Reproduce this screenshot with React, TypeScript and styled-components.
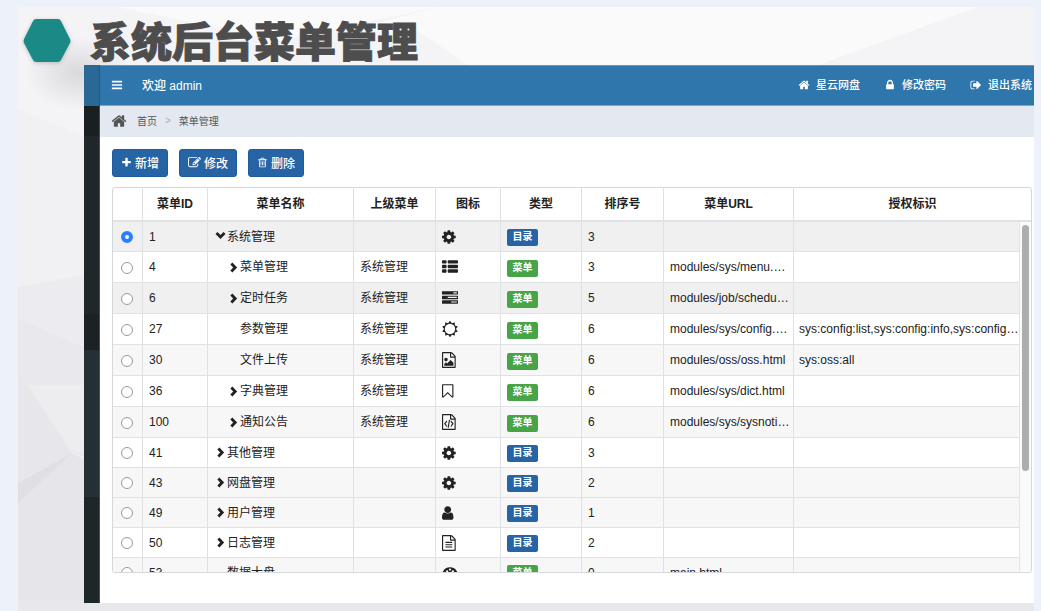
import React, { useState } from "react";
import styled, { createGlobalStyle, css } from "styled-components";

const GlobalStyle = createGlobalStyle`
  *, *::before, *::after { box-sizing: border-box; }
  html, body { margin: 0; background: #ecf1fa; }
  body, button, input {
    font-family: "Liberation Sans", "Noto Sans CJK SC", sans-serif;
    font-size: 12px;
    color: #222;
  }
  body { overflow: hidden; }
`;

/* ---------- icons ---------- */

const page =
  "M1596 380q28 28 48 76t20 88v1152q0 40-28 68t-68 28h-1344q-40 0-68-28t-28-68v-1600q0-40 28-68t68-28h896q40 0 88 20t76 48zm-444-244v376h376q-10-29-22-41l-313-313q-12-12-41-22zm384 1528v-1024h-416q-40 0-68-28t-28-68v-416h-768v1536h1280z";

const bar = (y: number) =>
  `M1664 ${y}v128q0 26-19 45t-45 19h-1408q-26 0-45-19t-19-45v-128q0-26 19-45t45-19h1408q26 0 45 19t19 45z`;

const listRow = (y: number) =>
  `M512 ${y}v192q0 40-28 68t-68 28h-320q-40 0-68-28t-28-68v-192q0-40 28-68t68-28h320q40 0 68 28t28 68z` +
  `M1792 ${y}v192q0 40-28 68t-68 28h-960q-40 0-68-28t-28-68v-192q0-40 28-68t68-28h960q40 0 68 28t28 68z`;

const taskRow = (y: number) =>
  `M1792 ${y}v256q0 26-19 45t-45 19h-1664q-26 0-45-19t-19-45v-256q0-26 19-45t45-19h1664q26 0 45 19t19 45z`;

const textLine = (y: number) =>
  `M512 ${y}q0-14 9-23t23-9h704q14 0 23 9t9 23v64q0 14-9 23t-23 9h-704q-14 0-23-9t-9-23z`;

const paths = {
  bars: bar(1344) + bar(832) + bar(320),
  home: "M1472 992v480q0 26-19 45t-45 19h-384v-384h-256v384h-384q-26 0-45-19t-19-45v-480q0-1 .5-3t.5-3l575-474 575 474q1 2 1 6zm223-69l-62 74q-8 9-21 11h-3q-13 0-21-7l-692-577-692 577q-12 8-24 7-13-2-21-11l-62-74q-8-10-7-23.5t11-21.5l719-599q32-26 76-26t76 26l244 204v-195q0-14 9-23t23-9h192q14 0 23 9t9 23v408l219 182q10 8 11 21.5t-7 23.5z",
  lock: "M640 768h512v-192q0-106-75-181t-181-75-181 75-75 181v192zm832 96v576q0 40-28 68t-68 28h-960q-40 0-68-28t-28-68v-576q0-40 28-68t68-28h32v-192q0-184 132-316t316-132 316 132 132 316v192h32q40 0 68 28t28 68z",
  signOut:
    "M704 1440q0 4 1 20t.5 26.5-3 23.5-10 19.5-20.5 6.5h-320q-119 0-203.5-84.5t-84.5-203.5v-704q0-119 84.5-203.5t203.5-84.5h320q13 0 22.5 9.5t9.5 22.5q0 4 1 20t.5 26.5-3 23.5-10 19.5-20.5 6.5h-320q-66 0-113 47t-47 113v704q0 66 47 113t113 47h312l11.5 1 11.5 3 8 5.5 7 9 2 13.5zm928-544q0 26-19 45l-544 544q-19 19-45 19t-45-19-19-45v-288h-448q-26 0-45-19t-19-45v-384q0-26 19-45t45-19h448v-288q0-26 19-45t45-19 45 19l544 544q19 19 19 45z",
  plus: "M1600 736v192q0 40-28 68t-68 28h-416v416q0 40-28 68t-68 28h-192q-40 0-68-28t-28-68v-416h-416q-40 0-68-28t-28-68v-192q0-40 28-68t68-28h416v-416q0-40 28-68t68-28h192q40 0 68 28t28 68v416h416q40 0 68 28t28 68z",
  edit: "M888 1184l116-116-152-152-116 116v56h96v96h56zm440-720q-16-16-33 1l-350 350q-17 17-1 33t33-1l350-350q17-17 1-33zm80 594v190q0 119-84.5 203.5t-203.5 84.5h-832q-119 0-203.5-84.5t-84.5-203.5v-832q0-119 84.5-203.5t203.5-84.5h832q63 0 117 25 15 7 18 23 3 17-9 29l-49 49q-14 14-32 8-23-6-45-6h-832q-66 0-113 47t-47 113v832q0 66 47 113t113 47h832q66 0 113-47t47-113v-126q0-13 9-22l64-64q15-15 35-7t20 29zm-96-738l288 288-672 672h-288v-288zm444 132l-92 92-288-288 92-92q28-28 68-28t68 28l152 152q28 28 28 68t-28 68z",
  trash:
    "M704 736v576q0 14-9 23t-23 9h-64q-14 0-23-9t-9-23v-576q0-14 9-23t23-9h64q14 0 23 9t9 23zm256 0v576q0 14-9 23t-23 9h-64q-14 0-23-9t-9-23v-576q0-14 9-23t23-9h64q14 0 23 9t9 23zm256 0v576q0 14-9 23t-23 9h-64q-14 0-23-9t-9-23v-576q0-14 9-23t23-9h64q14 0 23 9t9 23zm128 724v-948h-896v948q0 22 7 40.5t14.5 27 10.5 8.5h832q3 0 10.5-8.5t14.5-27 7-40.5zm-672-1076h448l-48-117q-7-9-17-11h-317q-10 2-17 11zm928 32v64q0 14-9 23t-23 9h-96v948q0 83-47 143.5t-113 60.5h-832q-66 0-113-58.5t-47-141.5v-952h-96q-14 0-23-9t-9-23v-64q0-14 9-23t23-9h309l70-167q15-37 54-63t79-26h320q40 0 79 26t54 63l70 167h309q14 0 23 9t9 23z",
  cog: "M1152 896q0-106-75-181t-181-75-181 75-75 181 75 181 181 75 181-75 75-181zm512-109v222q0 12-8 23t-20 13l-185 28q-19 54-39 91 35 50 107 138 10 12 10 25t-9 23q-27 37-99 108t-94 71q-12 0-26-9l-138-108q-44 23-91 38-16 136-29 186-7 28-36 28h-222q-14 0-24.5-8.5t-11.5-21.5l-28-184q-49-16-90-37l-141 107q-10 9-25 9-14 0-25-11-126-114-165-168-7-10-7-23 0-12 8-23 15-21 51-66.5t54-70.5q-27-50-41-99l-183-27q-13-2-21-12.5t-8-23.5v-222q0-12 8-23t19-13l186-28q14-46 39-92-40-57-107-138-10-12-10-24 0-10 9-23 26-36 98.5-107.5t94.5-71.5q13 0 26 10l138 107q44-23 91-38 16-136 29-186 7-28 36-28h222q14 0 24.5 8.5t11.5 21.5l28 184q49 16 90 37l142-107q9-9 24-9 13 0 25 10 129 119 165 170 7 8 7 22 0 12-8 23-15 21-51 66.5t-54 70.5q26 50 41 98l183 28q13 2 21 12.5t8 23.5z",
  list: listRow(1248) + listRow(736) + listRow(224),
  tasks:
    taskRow(1216) +
    taskRow(704) +
    taskRow(192) +
    "M1024 1408h640v-128h-640zM640 896h1024v-128h-1024zM1280 384h384v-128h-384z",
  sun: "M1472 896q0-117-45.5-223.5t-123-184-184-123-223.5-45.5-223.5 45.5-184 123-123 184-45.5 223.5 45.5 223.5 123 184 184 123 223.5 45.5 223.5-45.5 184-123 123-184 45.5-223.5zm276 277q-4 15-20 20l-292 96v306q0 16-13 26-15 10-29 4l-292-94-180 248q-10 13-26 13t-26-13l-180-248-292 94q-14 6-29-4-13-10-13-26v-306l-292-96q-16-5-20-20-5-17 4-29l180-248-180-248q-9-13-4-29 4-15 20-20l292-96v-306q0-16 13-26 15-10 29-4l292 94 180-248q9-12 26-12t26 12l180 248 292-94q14-6 29 4 13 10 13 26v306l292 96q16 5 20 20 5 16-4 29l-180 248 180 248q9 12 4 29z",
  image:
    page +
    "M1408 1216v320h-1024v-192l192-192 128 128 384-384zM576 1024q-80 0-136-56t-56-136 56-136 136-56 136 56 56 136-56 136-136 56z",
  bookmark:
    "M1408 256h-1024v1242l423-406 89-85 89 85 423 406v-1242zm12-128q23 0 44 9 33 13 52.5 41t19.5 62v1289q0 34-19.5 62t-52.5 41q-19 8-44 8-48 0-83-32l-441-424-441 424q-36 33-83 33-23 0-44-9-33-13-52.5-41t-19.5-62v-1289q0-34 19.5-62t52.5-41q21-9 44-9h1048z",
  code:
    page +
    "M608 768q8-11 21-12.5t24 6.5l51 38q11 8 12.5 21t-6.5 24l-182 243 182 243q8 11 6.5 24t-12.5 21l-51 38q-11 8-24 6.5t-21-12.5l-226-301q-14-19 0-38zm802 301q14 19 0 38l-226 301q-8 11-21 12.5t-24-6.5l-51-38q-11-8-12.5-21t6.5-24l182-243-182-243q-8-11-6.5-24t12.5-21l51-38q11-8 24-6.5t21 12.5zm-620 461q-13-2-20.5-13t-5.5-24l138-831q2-13 13-20.5t24-5.5l63 10q13 2 20.5 13t5.5 24l-138 831q-2 13-13 20.5t-24 5.5z",
  user: "M1536 1399q0 109-62.5 187t-150.5 78h-854q-88 0-150.5-78t-62.5-187q0-85 8.5-160.5t31.5-152 58.5-131 94-89 134.5-34.5q131 128 313 128t313-128q76 0 134.5 34.5t94 89 58.5 131 31.5 152 8.5 160.5zm-256-887q0 159-112.5 271.5t-271.5 112.5-271.5-112.5-112.5-271.5 112.5-271.5 271.5-112.5 271.5 112.5 112.5 271.5z",
  file: page + textLine(800) + textLine(1056) + textLine(1312),
  gauge:
    "M896 256a896 896 0 0 1 760 1370q-18 38-56 38H192q-38 0-56-38A896 896 0 0 1 896 256zM384 1024a128 128 0 1 0 0 256 128 128 0 0 0 0-256zM576 576a128 128 0 1 0 0 256 128 128 0 0 0 0-256zM896 384a128 128 0 1 0 0 256 128 128 0 0 0 0-256zM1216 576a128 128 0 1 0 0 256 128 128 0 0 0 0-256zM1408 1024a128 128 0 1 0 0 256 128 128 0 0 0 0-256zM850 1150a160 160 0 1 0 124 20l80-380-100-24z",
  right: "M740 206L1400 896 740 1586 460 1310 850 896 460 482z",
  down: "M206 560L482 280 896 690 1310 280 1586 560 896 1240z",
};

type IconName = keyof typeof paths;

/* Left bearing of glyphs narrower than the em box, so they align to the cell's start. */
const bearings: Partial<Record<IconName, number>> = {
  cog: 128,
  image: 128,
  code: 128,
  file: 128,
  user: 256,
  bookmark: 256,
};

const Svg = styled.svg`
  flex: none;
  display: block;
  fill: currentColor;
`;

const Icon = ({ name, size = 14 }: { name: IconName; size?: number }) => (
  <Svg width={size} height={size} viewBox={`${bearings[name] ?? 0} 0 1792 1792`} aria-hidden="true">
    <path d={paths[name]} fillRule="evenodd" />
  </Svg>
);

/* ---------- slide ---------- */

const Slide = styled.div`
  position: relative;
  margin: 7px 7px 0 18px;
  min-height: calc(100vh - 7px);
  padding-bottom: 8px;
  background: #f4f4f6;
`;

const Backdrop = styled.svg`
  position: absolute;
  inset: 0;
  width: 100%;
  height: 100%;
`;

const SlideTitle = styled.header`
  position: relative;
  display: flex;
  align-items: flex-start;
  gap: 18px;
  height: 58px;
  padding: 12px 0 0 4px;

  h1 {
    margin: 0;
    font-family: "Noto Sans CJK SC", sans-serif;
    font-size: 41px;
    line-height: 40px;
    font-weight: 900;
    color: #4d4d4d;
    -webkit-text-stroke: 1px #4d4d4d;
    white-space: nowrap;
  }
`;

const Hexagon = styled.svg`
  flex: none;
  display: block;
  filter: drop-shadow(0 1px 2px rgba(0, 0, 0, 0.2));
`;

/* ---------- application ---------- */

const AppFrame = styled.div`
  position: relative;
  display: flex;
  margin-left: 66px;
  background: #fff;
`;

const Sidebar = styled.aside`
  flex: none;
  display: flex;
  flex-direction: column;
  width: 16px;
  border-right: 1px solid #4a4e50;
`;

const SideBlock = styled.div<{ $h?: number; $bg: string }>`
  flex: ${(p) => (p.$h ? `0 0 ${p.$h}px` : "1")};
  background: ${(p) => p.$bg};
`;

const Main = styled.main`
  flex: 1;
  min-width: 0;
  padding-bottom: 30px;
`;

const TopBar = styled.nav`
  display: flex;
  align-items: center;
  height: 41px;
  padding: 0 2px 2px 11px;
  background: #2e76ab;
  border-top: 1px solid #6f93ad;
  border-bottom: 1px solid #7fa9c8;
  color: #fff;
`;

const MenuToggle = styled.button`
  display: flex;
  padding: 0;
  border: 0;
  background: none;
  color: inherit;
`;

const Welcome = styled.span`
  flex: 1;
  margin-left: 19px;
  font-weight: 500;
`;

const TopLinks = styled.div`
  display: flex;
  gap: 24px;
`;

const TopLink = styled.a`
  display: flex;
  align-items: center;
  gap: 6px;
  color: inherit;
  font-size: 11px;
  font-weight: 500;
  line-height: 16px;
  text-decoration: none;
  white-space: nowrap;
`;

const Crumbs = styled.nav`
  display: flex;
  align-items: center;
  gap: 8px;
  height: 31px;
  padding: 0 0 2px 11px;
  background: #e4e9f1;
  color: #555;
  font-size: 10px;

  a {
    color: inherit;
    text-decoration: none;
    margin-left: 2px;
  }
`;

const CrumbSep = styled.span`
  color: #aaa;
`;

const Content = styled.section`
  padding: 12px 2px 0 12px;
`;

const Toolbar = styled.div`
  display: flex;
  gap: 11px;
  margin-bottom: 10px;
`;

const ToolButton = styled.button`
  display: flex;
  align-items: center;
  justify-content: center;
  gap: 3px;
  height: 28px;
  padding: 0 8px 1px;
  border: 1px solid #1f5b9b;
  border-radius: 3px;
  background: #2764a5;
  color: #fff;
  font-weight: 500;
`;

/* ---------- grid ---------- */

const Grid = styled.div`
  border: 1px solid #d5d8da;
  border-radius: 3px;
  overflow: hidden;
`;

const Table = styled.table`
  width: 100%;
  table-layout: fixed;
  border-collapse: separate;
  border-spacing: 0;
`;

const HeadCell = styled.th`
  height: 34px;
  padding: 0;
  border-left: 1px solid #dfe2e4;
  border-bottom: 2px solid #dfe2e4;
  font-weight: 700;
  line-height: 16px;
  text-align: center;

  &:first-child {
    border-left: 0;
  }
`;

const Viewport = styled.div`
  display: flex;
  height: 350px;
  overflow: hidden;
`;

const Rows = styled.div`
  flex: 1;
  min-width: 0;
`;

const Row = styled.tr<{ $bg: string; $tall: boolean }>`
  height: ${(p) => (p.$tall ? 31 : 30)}px;
  background: ${(p) => p.$bg};
`;

const Cell = styled.td<{ $kind?: "pick" | "long" }>`
  height: inherit;
  padding: 0 3px 0 6px;
  border-left: 1px solid #dfe2e4;
  border-bottom: 1px solid #dfe2e4;
  line-height: 16px;
  overflow: hidden;
  white-space: nowrap;
  text-overflow: ellipsis;

  &:first-child {
    border-left: 0;
  }
  ${(p) =>
    p.$kind === "pick" &&
    css`
      padding: 0 0 0 8px;
    `}
  ${(p) =>
    p.$kind === "long" &&
    css`
      padding: 0 0 0 5px;
    `}
`;

const Radio = styled.input`
  appearance: none;
  display: block;
  width: 12px;
  height: 12px;
  margin: 1px 0 0;
  border: 1px solid #999;
  border-radius: 50%;
  background: #fff;

  &:checked {
    border: 4px solid #2a7fff;
  }
`;

const NameCell = styled.div<{ $depth: number; $leaf: boolean }>`
  display: flex;
  align-items: center;
  padding-left: ${(p) => p.$depth * 13 + (p.$leaf ? 13 : 0)}px;
`;

const Badge = styled.span<{ $green: boolean }>`
  display: block;
  width: 31px;
  height: 17px;
  margin-top: 2px;
  border-radius: 2px;
  background: ${(p) => (p.$green ? "#47a447" : "#2764a5")};
  color: #fff;
  font-size: 10px;
  font-weight: 700;
  line-height: 16px;
  text-align: center;
`;

const ScrollTrack = styled.div`
  flex: none;
  width: 12px;
  padding: 3px 2px 0;
  border-left: 1px solid #e2e4e6;
  background: #fafafa;
`;

const ScrollThumb = styled.div`
  width: 7px;
  height: 246px;
  border-radius: 4px;
  background: #adadad;
`;

type Item = {
  id: number;
  name: string;
  state: "open" | "closed" | "leaf";
  depth?: number;
  parent?: string;
  icon: IconName;
  menu?: boolean;
  order: number;
  url?: string;
  perms?: string;
  bg: string;
};

const items: Item[] = [
  { id: 1, name: "系统管理", state: "open", icon: "cog", order: 3, bg: "#f0f0f0" },
  { id: 4, name: "菜单管理", state: "closed", depth: 1, parent: "系统管理", icon: "list", menu: true, order: 3, url: "modules/sys/menu.html", bg: "#fff" },
  { id: 6, name: "定时任务", state: "closed", depth: 1, parent: "系统管理", icon: "tasks", menu: true, order: 5, url: "modules/job/schedule.html", bg: "#f0f0f0" },
  { id: 27, name: "参数管理", state: "leaf", depth: 1, parent: "系统管理", icon: "sun", menu: true, order: 6, url: "modules/sys/config.html", perms: "sys:config:list,sys:config:info,sys:config:save", bg: "#fff" },
  { id: 30, name: "文件上传", state: "leaf", depth: 1, parent: "系统管理", icon: "image", menu: true, order: 6, url: "modules/oss/oss.html", perms: "sys:oss:all", bg: "#f7f7f7" },
  { id: 36, name: "字典管理", state: "closed", depth: 1, parent: "系统管理", icon: "bookmark", menu: true, order: 6, url: "modules/sys/dict.html", bg: "#fff" },
  { id: 100, name: "通知公告", state: "closed", depth: 1, parent: "系统管理", icon: "code", menu: true, order: 6, url: "modules/sys/sysnotice.html", bg: "#f7f7f7" },
  { id: 41, name: "其他管理", state: "closed", icon: "cog", order: 3, bg: "#fff" },
  { id: 43, name: "网盘管理", state: "closed", icon: "cog", order: 2, bg: "#f7f7f7" },
  { id: 49, name: "用户管理", state: "closed", icon: "user", order: 1, bg: "#f7f7f7" },
  { id: 50, name: "日志管理", state: "closed", icon: "file", order: 2, bg: "#fff" },
  { id: 53, name: "数据大盘", state: "leaf", icon: "gauge", menu: true, order: 0, url: "main.html", bg: "#f7f7f7" },
];

const headings = ["", "菜单ID", "菜单名称", "上级菜单", "图标", "类型", "排序号", "菜单URL", "授权标识"];
const widths = [29, 65, 146, 82, 65, 81, 82, 130];

const Columns = () => (
  <colgroup>
    {widths.map((w, i) => (
      <col key={i} width={w} />
    ))}
    <col />
  </colgroup>
);

export default function App() {
  const [selected, setSelected] = useState(1);

  return (
    <>
      <GlobalStyle />
      <Slide>
        <Backdrop viewBox="0 0 1016 604" preserveAspectRatio="none" aria-hidden="true">
          <defs>
            <radialGradient id="shade">
              <stop offset="0" stopColor="#d2d2d6" stopOpacity="0.8" />
              <stop offset="1" stopColor="#d2d2d6" stopOpacity="0" />
            </radialGradient>
          </defs>
          <path d="M100 0L260 34 420 0z" fill="#fafafb" />
          <path d="M330 24L420 0H960L800 58H450L400 24z" fill="#fafafb" />
          <path d="M0 102L66 129V270L0 280z" fill="#f1f1f3" />
          <path d="M0 280L66 268V340L0 311z" fill="#ececf0" />
          <path d="M0 311L66 340V450L54 446 0 365z" fill="#e9e9ed" />
          <path d="M10 378L66 378V446L54 446z" fill="#ededf0" />
          <path d="M0 365L54 446 0 476z" fill="#e7e7eb" />
          <path d="M0 476L54 446 66 452V604H0z" fill="#e6e6ea" />
          <path d="M0 476L54 446 0 496z" fill="#e0e0e4" />
          <path d="M0 594H1016V604H0z" fill="#e8e8ec" />
          <ellipse cx="60" cy="66" rx="52" ry="36" fill="url(#shade)" />
        </Backdrop>

        <SlideTitle>
          <Hexagon width="50" height="44" viewBox="0 0 50 44" aria-hidden="true">
            <path d="M14 0H36Q38 0 39 2L48 20Q49 22 48 24L39 41Q38 43 36 43H14Q12 43 11 41L2 24Q1 22 2 20L11 2Q12 0 14 0z" fill="#1b8a87" />
          </Hexagon>
          <h1>系统后台菜单管理</h1>
        </SlideTitle>

        <AppFrame>
          <Sidebar>
            <SideBlock $h={41} $bg="#2a6996" />
            <SideBlock $h={30} $bg="#1a1f21" />
            <SideBlock $h={178} $bg="#1f272a" />
            <SideBlock $h={36} $bg="#1b2124" />
            <SideBlock $h={147} $bg="#243034" />
            <SideBlock $bg="#1d2629" />
          </Sidebar>
          <Main>
            <TopBar>
              <MenuToggle type="button" aria-label="切换菜单">
                <Icon name="bars" size={12} />
              </MenuToggle>
              <Welcome>欢迎 admin</Welcome>
              <TopLinks>
                <TopLink href="#disk"><Icon name="home" size={12} />星云网盘</TopLink>
                <TopLink href="#password"><Icon name="lock" size={12} />修改密码</TopLink>
                <TopLink href="#logout"><Icon name="signOut" size={12} />退出系统</TopLink>
              </TopLinks>
            </TopBar>

            <Crumbs>
              <Icon name="home" size={16} />
              <a href="#home">首页</a>
              <CrumbSep>&gt;</CrumbSep>
              <span>菜单管理</span>
            </Crumbs>

            <Content>
              <Toolbar>
                <ToolButton type="button"><Icon name="plus" size={11} />新增</ToolButton>
                <ToolButton type="button"><Icon name="edit" size={13} />修改</ToolButton>
                <ToolButton type="button"><Icon name="trash" size={11} />删除</ToolButton>
              </Toolbar>

              <Grid>
                <Table>
                  <Columns />
                  <thead>
                    <tr>
                      {headings.map((h, i) => (
                        <HeadCell key={i} scope="col">{h}</HeadCell>
                      ))}
                    </tr>
                  </thead>
                </Table>
                <Viewport>
                  <Rows>
                    <Table>
                      <Columns />
                      <tbody>
                        {items.map((it) => (
                          <Row key={it.id} $bg={it.bg} $tall={!!it.parent}>
                            <Cell $kind="pick">
                              <Radio
                                type="radio"
                                name="menu"
                                aria-label={it.name}
                                checked={selected === it.id}
                                onChange={() => setSelected(it.id)}
                              />
                            </Cell>
                            <Cell>{it.id}</Cell>
                            <Cell>
                              <NameCell $depth={it.depth ?? 0} $leaf={it.state === "leaf"}>
                                {it.state !== "leaf" && (
                                  <Icon name={it.state === "open" ? "down" : "right"} size={13} />
                                )}
                                {it.name}
                              </NameCell>
                            </Cell>
                            <Cell>{it.parent}</Cell>
                            <Cell><Icon name={it.icon} size={16} /></Cell>
                            <Cell><Badge $green={!!it.menu}>{it.menu ? "菜单" : "目录"}</Badge></Cell>
                            <Cell>{it.order}</Cell>
                            <Cell>{it.url}</Cell>
                            <Cell $kind="long">{it.perms}</Cell>
                          </Row>
                        ))}
                      </tbody>
                    </Table>
                  </Rows>
                  <ScrollTrack>
                    <ScrollThumb />
                  </ScrollTrack>
                </Viewport>
              </Grid>
            </Content>
          </Main>
        </AppFrame>
      </Slide>
    </>
  );
}
